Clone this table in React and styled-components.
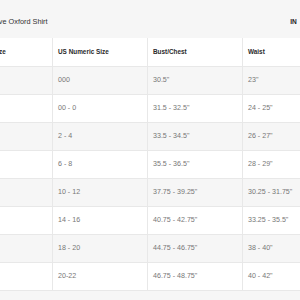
import React from "react";
import styled, { createGlobalStyle } from "styled-components";

const GlobalStyle = createGlobalStyle`
  body {
    margin: 0;
    background: #f6f6f6;
    font-family: "Liberation Sans", Arial, sans-serif;
  }
`;

const rows = [
  ["", "000", '30.5"', '23"', '33"'],
  ["", "00 - 0", '31.5 - 32.5"', '24 - 25"', '34 - 35"'],
  ["", "2 - 4", '33.5 - 34.5"', '26 - 27"', '36 - 37"'],
  ["", "6 - 8", '35.5 - 36.5"', '28 - 29"', '38 - 39"'],
  ["", "10 - 12", '37.75 - 39.25"', '30.25 - 31.75"', '40.25 - 41.75"'],
  ["", "14 - 16", '40.75 - 42.75"', '33.25 - 35.5"', '43.25 - 45.5"'],
  ["", "18 - 20", '44.75 - 46.75"', '38 - 40"', '48 - 50"'],
  ["", "20-22", '46.75 - 48.75"', '40 - 42"', '50 - 52"'],
];

const headers = ["US Alpha Size", "US Numeric Size", "Bust/Chest", "Waist", "Hip"];

function App() {
  return (
    <>
      <GlobalStyle />
      <Page>
        <Sheet>
          <TopBar>
            <Title>Long Sleeve Oxford Shirt</Title>
            <Units>
              <Unit active>IN</Unit>
              <Unit>CM</Unit>
            </Units>
          </TopBar>
          <Table>
            <thead>
              <tr>
                {headers.map((h) => (
                  <Th key={h}>{h}</Th>
                ))}
              </tr>
            </thead>
            <tbody>
              {rows.map((r, i) => (
                <Row key={i} striped={i % 2 === 0}>
                  {r.map((c, j) => (
                    <Td key={j}>{c}</Td>
                  ))}
                </Row>
              ))}
            </tbody>
          </Table>
        </Sheet>
      </Page>
    </>
  );
}

export default App;

const Page = styled.div`
  width: 300px;
  height: 300px;
  overflow: hidden;
  background: #f6f6f6;
`;
const Sheet = styled.div`
  margin-left: -43px;
  width: 368px;
`;
const TopBar = styled.div`
  display: flex;
  align-items: center;
  justify-content: space-between;
  height: 38px;
  padding: 5px 10px 0 9px;
  box-sizing: border-box;
`;
const Title = styled.div`
  font-size: 7.3px;
  color: #333;
  white-space: nowrap;
`;
const Units = styled.div`
  display: flex;
  gap: 8px;
`;
const Unit = styled.span`
  font-size: 6.6px;
  font-weight: 700;
  color: ${(p) => (p.active ? "#222" : "#999")};
`;
const Table = styled.table`
  border-collapse: collapse;
  table-layout: fixed;
  width: 475px;
  font-size: 7.1px;
`;
const Th = styled.th`
  width: 95px;
  height: 28px;
  box-sizing: border-box;
  padding: 0 0 0 5px;
  text-align: left;
  font-size: 6.4px;
  font-weight: 700;
  color: #2a2a2a;
  background: #fff;
  border: 1px solid #e8e8e8;
  border-top: none;
  white-space: nowrap;
`;
const Row = styled.tr`
  background: ${(p) => (p.striped ? "#f6f6f6" : "#fff")};
`;
const Td = styled.td`
  height: 28px;
  box-sizing: border-box;
  padding: 0 0 0 5px;
  color: #777;
  border: 1px solid #e8e8e8;
  white-space: nowrap;
`;
